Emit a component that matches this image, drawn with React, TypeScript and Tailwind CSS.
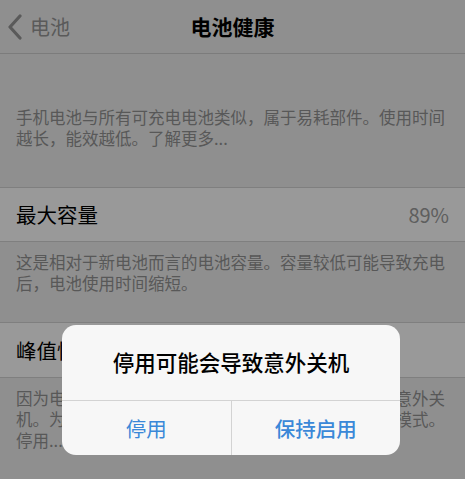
const font = { fontFamily: '"Noto Sans CJK SC", "Noto Sans", sans-serif' };

function Footer({ lines, className = "" }: { lines: string[]; className?: string }) {
  return (
    <div className={`px-4 text-[16.5px] leading-[21px] text-[#939393] ${className}`}>
      {lines.map((l) => (
        <div key={l} className="whitespace-nowrap">
          {l}
        </div>
      ))}
    </div>
  );
}

function Row({ label, value }: { label: string; value?: string }) {
  return (
    <div className="flex h-full items-center justify-between border-y border-[#d4d4d4] bg-white px-4">
      <span className="text-[20.5px] text-black">{label}</span>
      {value && <span className="text-[20px] text-[#9d9d9d]">{value}</span>}
    </div>
  );
}

function BackChevron() {
  return (
    <svg width="16" height="26" viewBox="0 0 16 26" fill="none">
      <path d="M13 2 L3 13 L13 24" stroke="currentColor" strokeWidth="3.2" strokeLinecap="round" strokeLinejoin="round" />
    </svg>
  );
}

export default function App() {
  return (
    <div className="relative h-[479px] w-[465px] overflow-hidden bg-[#efefef]" style={font}>
      {/* nav bar */}
      <div className="relative flex h-[54px] items-center border-b border-[#cfcfcf]">
        <div className="flex items-center gap-[7px] pl-[7px] text-[#969696]">
          <BackChevron />
          <span className="text-[20px]">电池</span>
        </div>
        <div className="absolute inset-x-0 text-center text-[21px] font-semibold text-black">
          电池健康
        </div>
      </div>

      <Footer
        className="pt-[53px] pb-[38px]"
        lines={["手机电池与所有可充电电池类似，属于易耗部件。使用时间", "越长，能效越低。了解更多..."]}
      />

      <div className="h-[55px]">
        <Row label="最大容量" value="89%" />
      </div>

      <Footer
        className="pt-[10px] pb-[28px]"
        lines={["这是相对于新电池而言的电池容量。容量较低可能导致充电", "后，电池使用时间缩短。"]}
      />

      <div className="h-[56px]">
        <Row label="峰值性能容量" />
      </div>

      <Footer
        className="pt-[10px]"
        lines={[
          "因为电池无法提供必需的峰值电量，这部手机曾出现意外关",
          "机。为防止再次发生，已对这部手机启用了性能管理模式。",
          "停用...",
        ]}
      />

      {/* dimming layer + alert */}
      <div className="absolute inset-0 bg-black/40" />
      <div className="absolute left-[62px] top-[325px] w-[338px] overflow-hidden rounded-[14px] bg-[#f7f7f7]">
        <div className="flex h-[75px] items-center justify-center text-[21.5px] font-medium text-black">
          停用可能会导致意外关机
        </div>
        <div className="flex h-[55px] border-t border-[#d3d3d3] text-[20.5px] text-[#3a88d8]">
          <div className="flex flex-1 items-center justify-center border-r border-[#d3d3d3]">停用</div>
          <div className="flex flex-1 items-center justify-center font-medium">保持启用</div>
        </div>
      </div>
    </div>
  );
}
